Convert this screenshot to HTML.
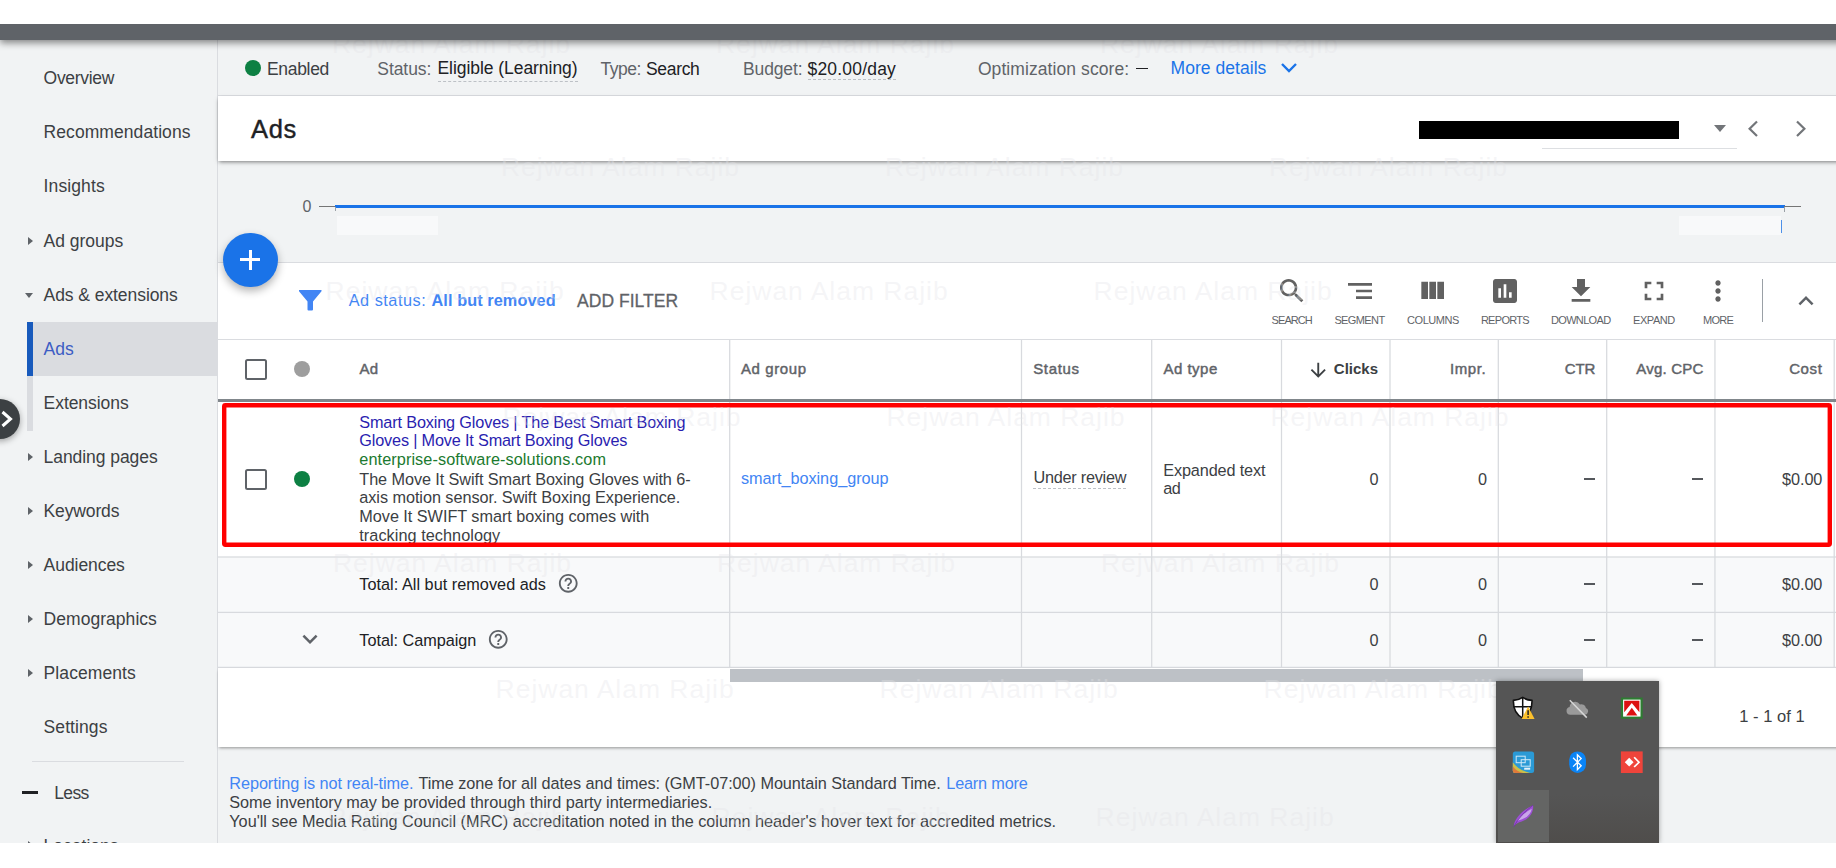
<!DOCTYPE html>
<html><head><meta charset="utf-8"><title>Ads</title>
<style>
*{box-sizing:border-box;margin:0;padding:0}
html,body{width:1836px;height:868px;overflow:hidden;background:#fff}
body{font-family:"Liberation Sans",Arial,sans-serif;color:#3c4043;position:relative}
#app{position:absolute;left:0;top:24px;width:1836px;height:819px;background:#f1f3f4;overflow:hidden}
#app div,#app span,#app svg{position:absolute}
#app span.i{position:static}
.t{white-space:nowrap}
#topbar{left:0;top:0;width:1860px;height:16px;background:#5f6368;box-shadow:0 3px 7px rgba(0,0,0,.45);z-index:20}
/* sidebar */
#side{left:0;top:16px;width:218px;height:803px;border-right:1px solid #dadce0;background:#f1f3f4}
.nav{left:44px;font-size:17.5px;color:#3c4043;line-height:20px;white-space:nowrap}
.tri{left:28px;width:0;height:0;border-left:5px solid #5f6368;border-top:4px solid transparent;border-bottom:4px solid transparent}
/* main */
#status{left:218px;top:16px;width:1618px;height:56px;border-bottom:1px solid #dadce0;background:#f1f3f4}
.st{font-size:17.5px;line-height:20px;top:17px;white-space:nowrap;color:#3c4043}
.lbl{color:#5f6368}
#head{left:218px;top:72px;width:1618px;height:65px;background:#fff;box-shadow:0 1px 3px rgba(0,0,0,.35);z-index:5}
#chart{left:218px;top:137px;width:1618px;height:101px;background:#f1f3f4}
#tool{left:218px;top:238px;width:1618px;height:78px;background:#fff;border-top:1px solid #dadce0;border-bottom:1px solid #dadce0}
.tl{font-size:10px;line-height:12px;color:#5f6368;top:51px;white-space:nowrap;letter-spacing:0}
.ic{fill:#5f6368}
#tbl{left:218px;top:316px;width:1618px;height:341px;background:#fff}
.vl{width:1px;background:#dadce0;top:0;height:341px}
.th{font-size:15px;line-height:18px;color:#5f6368;font-weight:bold;top:21px;white-space:nowrap}
.td{font-size:16.25px;line-height:18.75px;white-space:nowrap;color:#3c4043}
.r{text-align:right}
.wm{font-size:25px;color:rgba(120,120,130,.10);white-space:nowrap;z-index:30;line-height:30px;letter-spacing:.5px}
</style></head><body>
<div id="app">
<div id="topbar"></div>
<!--SIDE_S--><div id="side">
<div style="left:27px;top:282px;width:190px;height:54px;background:#dadce0"></div>
<div style="left:27px;top:282px;width:6px;height:54px;background:#185abc"></div>
<div style="left:27px;top:336px;width:6px;height:55px;background:#dadce0"></div>
<div class="nav" style="left:43.6px;top:28.2px;letter-spacing:-0.304px">Overview</div>
<div class="nav" style="left:43.6px;top:82.3px;letter-spacing:0.067px">Recommendations</div>
<div class="nav" style="left:43.6px;top:136.4px;letter-spacing:0.112px">Insights</div>
<div class="nav" style="left:43.6px;top:190.5px;letter-spacing:-0.030px">Ad groups</div>
<div class="tri" style="top:196.5px"></div>
<div class="nav" style="left:43.6px;top:244.6px;letter-spacing:-0.069px">Ads &amp; extensions</div>
<div style="left:25px;top:253.1px;width:0;height:0;border-top:5px solid #5f6368;border-left:4px solid transparent;border-right:4px solid transparent"></div>
<div class="nav" style="left:43.6px;top:298.7px;color:#3c5cc4;letter-spacing:-0.052px">Ads</div>
<div class="nav" style="left:43.6px;top:352.8px;letter-spacing:-0.060px">Extensions</div>
<div class="nav" style="left:43.6px;top:406.9px;letter-spacing:-0.063px">Landing pages</div>
<div class="tri" style="top:412.9px"></div>
<div class="nav" style="left:43.6px;top:461.0px;letter-spacing:-0.142px">Keywords</div>
<div class="tri" style="top:467.0px"></div>
<div class="nav" style="left:43.6px;top:515.1px;letter-spacing:-0.058px">Audiences</div>
<div class="tri" style="top:521.1px"></div>
<div class="nav" style="left:43.6px;top:569.2px;letter-spacing:0.040px">Demographics</div>
<div class="tri" style="top:575.2px"></div>
<div class="nav" style="left:43.6px;top:623.3px;letter-spacing:0.087px">Placements</div>
<div class="tri" style="top:629.3px"></div>
<div class="nav" style="left:43.6px;top:677.4px;letter-spacing:0.084px">Settings</div>
<div style="left:32px;top:721px;width:152px;height:1px;background:#dadce0"></div>
<div style="left:22px;top:750.5px;width:16px;height:3px;background:#202124"></div>
<div class="nav" style="left:54.3px;top:743px;letter-spacing:-0.666px">Less</div>
<div class="nav" style="left:43.6px;top:796px">Locations</div>
<div class="tri" style="top:801px"></div>
<div style="left:-20px;top:359px;width:40px;height:40px;border-radius:50%;background:#3c4043;box-shadow:0 2px 6px rgba(0,0,0,.35)"></div>
<svg style="left:0;top:369px" width="16" height="20" viewBox="0 0 16 20"><path d="M2.5 3 L10.5 10 L2.5 17" fill="none" stroke="#fff" stroke-width="3"/></svg>
</div><!--SIDE_E-->
<!--MAIN_S--><div style="left:218.0px;top:16.0px;width:1618.0px;height:56.0px;background:#f1f3f4;border-bottom:1px solid #dadce0;"></div>
<div style="left:244.7px;top:35.5px;width:16.6px;height:16.6px;background:#0d8043;border-radius:50%;"></div>
<div style="left:267.0px;top:34.5px;font-size:17.5px;line-height:20px;white-space:nowrap;letter-spacing:-0.317px;">Enabled</div>
<div style="left:377.3px;top:34.5px;font-size:17.5px;line-height:20px;white-space:nowrap;letter-spacing:-0.067px;color:#5f6368;">Status:</div>
<div style="left:437.5px;top:33.8px;font-size:17.5px;line-height:20px;white-space:nowrap;letter-spacing:-0.055px;color:#202124;">Eligible (Learning)</div>
<div style="left:437.5px;top:57.0px;width:140.0px;height:1.0px;background:transparent;border-top:1px dashed #bdc1c6;"></div>
<div style="left:600.6px;top:34.5px;font-size:17.5px;line-height:20px;white-space:nowrap;letter-spacing:-0.480px;color:#5f6368;">Type:</div>
<div style="left:646.0px;top:34.5px;font-size:17.5px;line-height:20px;white-space:nowrap;letter-spacing:-0.324px;color:#202124;">Search</div>
<div style="left:743.0px;top:34.5px;font-size:17.5px;line-height:20px;white-space:nowrap;letter-spacing:-0.132px;color:#5f6368;">Budget:</div>
<div style="left:807.5px;top:34.5px;font-size:17.5px;line-height:20px;white-space:nowrap;letter-spacing:0.191px;color:#202124;">$20.00/day</div>
<div style="left:807.5px;top:55.0px;width:88.5px;height:1.0px;background:transparent;border-top:1px dashed #bdc1c6;"></div>
<div style="left:977.9px;top:34.5px;font-size:17.5px;line-height:20px;white-space:nowrap;letter-spacing:0.081px;color:#5f6368;">Optimization score:</div>
<div style="left:1136.0px;top:43.7px;width:11.6px;height:1.8px;background:#202124;"></div>
<div style="left:1170.6px;top:33.5px;font-size:17.5px;line-height:20px;white-space:nowrap;letter-spacing:0.041px;color:#1a73e8;">More details</div>
<svg style="left:1280px;top:38px" width="18" height="12" viewBox="0 0 18 12"><path d="M2 2 L9 9 L16 2" fill="none" stroke="#1a73e8" stroke-width="2.4"/></svg>
<div style="left:218.0px;top:72.0px;width:1640.0px;height:64.6px;background:#fff;box-shadow:0 2px 4px -1px rgba(0,0,0,.5);z-index:5;"></div>
<div style="left:251.0px;top:94.7px;font-size:25.5px;line-height:20px;white-space:nowrap;letter-spacing:0.687px;color:#202124;z-index:6;-webkit-text-stroke:.4px #202124;">Ads</div>
<div style="left:1542.0px;top:124.0px;width:195.2px;height:1.0px;background:#dddfe2;z-index:6;"></div>
<div style="left:1419.0px;top:96.5px;width:260.0px;height:18.2px;background:#000;z-index:7;"></div>
<div style="left:1714px;top:100.5px;width:0;height:0;border-top:7px solid #727579;border-left:6.6px solid transparent;border-right:6.6px solid transparent;z-index:6"></div>
<svg style="left:1745px;top:95px;z-index:6" width="16" height="20" viewBox="0 0 16 20"><path d="M12 2.5 L4.6 9.7 L12 17" fill="none" stroke="#727579" stroke-width="2.2"/></svg>
<svg style="left:1793px;top:95px;z-index:6" width="16" height="20" viewBox="0 0 16 20"><path d="M4 2.5 L11.4 9.7 L4 17" fill="none" stroke="#727579" stroke-width="2.2"/></svg>
<div style="left:302.6px;top:172.7px;font-size:16px;line-height:20px;white-space:nowrap;letter-spacing:-0.198px;color:#5f6368;">0</div>
<div style="left:319.3px;top:182.0px;width:16.0px;height:1.0px;background:#757575;"></div>
<div style="left:335.0px;top:181.4px;width:1449.5px;height:2.7px;background:#1a73e8;"></div>
<div style="left:1784.0px;top:182.0px;width:17.0px;height:1.0px;background:#757575;"></div>
<div style="left:335.0px;top:183.0px;width:1.0px;height:4.0px;background:#9aa0a6;"></div>
<div style="left:1784.0px;top:183.0px;width:1.0px;height:5.0px;background:#9aa0a6;"></div>
<div style="left:337.0px;top:192.0px;width:101.0px;height:19.0px;background:#f8f9fa;"></div>
<div style="left:1679.0px;top:192.0px;width:102.0px;height:19.0px;background:#f8f9fa;"></div>
<div style="left:1781.0px;top:196.0px;width:1.0px;height:12.5px;background:#4d90e8;"></div>
<div style="left:218.0px;top:238.0px;width:1618.0px;height:78.0px;background:#fff;border-top:1px solid #dadce0;border-bottom:1px solid #dadce0;"></div>
<div style="left:223.3px;top:208.6px;width:54.4px;height:54.4px;background:#1a73e8;border-radius:50%;box-shadow:0 4px 9px rgba(0,0,0,.3);z-index:8;"></div>
<div style="left:240.4px;top:234.2px;width:20.0px;height:3.0px;background:#fff;z-index:9;"></div>
<div style="left:248.9px;top:225.7px;width:3.0px;height:20.0px;background:#fff;z-index:9;"></div>
<svg style="left:299px;top:266px" width="23" height="21" viewBox="0 0 23 21"><path d="M0 0 H22.5 V1.2 L14 11.5 V19.5 Q14 20.6 13 20.6 H9.5 Q8.5 20.6 8.5 19.5 V11.5 L0 1.2 Z" fill="#4285f4"/></svg>
<div style="left:348.7px;top:266.1px;font-size:16.25px;line-height:20px;white-space:nowrap;letter-spacing:0.524px;color:#4285f4;">Ad status:</div>
<div style="left:431.5px;top:266.1px;font-size:16.25px;line-height:20px;white-space:nowrap;letter-spacing:0.094px;font-weight:bold;color:#4285f4;">All but removed</div>
<div style="left:577.0px;top:266.9px;font-size:17.5px;line-height:20px;white-space:nowrap;letter-spacing:0.041px;color:#5f6368;-webkit-text-stroke:.3px #5f6368;">ADD FILTER</div>
<svg style="left:1275.5px;top:251.0px" width="32.0" height="32.0" viewBox="0 0 24 24"><path d="M15.5 14h-.79l-.28-.27C15.41 12.59 16 11.11 16 9.5 16 5.91 13.09 3 9.5 3S3 5.91 3 9.5 5.91 16 9.5 16c1.61 0 3.09-.59 4.23-1.57l.27.28v.79l5 4.99L20.49 19l-4.99-5zm-6 0C7.01 14 5 11.99 5 9.5S7.01 5 9.5 5 14 7.01 14 9.5 11.99 14 9.5 14z" fill="#616161" /></svg>
<svg style="left:1343.5px;top:251.0px" width="32.0" height="32.0" viewBox="0 0 24 24"><path d="M9 18h12v-2H9v2zM3 6v2h18V6H3zm6 7h12v-2H9v2z" fill="#616161" /></svg>
<svg style="left:1416.4px;top:250.6px" width="32.0" height="32.0" viewBox="0 0 24 24"><path d="M10 18h5V5h-5v13zm-6 0h5V5H4v13zM16 5v13h5V5h-5z" fill="#616161" /></svg>
<svg style="left:1489.0px;top:251.0px" width="32.0" height="32.0" viewBox="0 0 24 24"><path d="M19 3H5c-1.1 0-2 .9-2 2v14c0 1.1.9 2 2 2h14c1.1 0 2-.9 2-2V5c0-1.1-.9-2-2-2zM9 17H7v-7h2v7zm4 0h-2V7h2v10zm4 0h-2v-4h2v4z" fill="#616161" /></svg>
<svg style="left:1564.7px;top:250.9px" width="32.0" height="32.0" viewBox="0 0 24 24"><path d="M19 9h-4V3H9v6H5l7 7 7-7zM5 18v2h14v-2H5z" fill="#616161" /></svg>
<svg style="left:1637.6px;top:250.8px" width="32.0" height="32.0" viewBox="0 0 24 24"><path d="M7 14H5v5h5v-2H7v-3zm-2-4h2V7h3V5H5v5zm12 7h-3v2h5v-5h-2v3zM14 5v2h3v3h2V5h-5z" fill="#616161" /></svg>
<svg style="left:1702.1px;top:251.0px" width="32.0" height="32.0" viewBox="0 0 24 24"><path d="M12 8c1.1 0 2-.9 2-2s-.9-2-2-2-2 .9-2 2 .9 2 2 2zm0 2c-1.1 0-2 .9-2 2s.9 2 2 2 2-.9 2-2-.9-2-2-2zm0 6c-1.1 0-2 .9-2 2s.9 2 2 2 2-.9 2-2-.9-2-2-2z" fill="#616161" /></svg>
<svg style="left:1791.2px;top:262.2px" width="30.0" height="30.0" viewBox="0 0 24 24"><path d="M12 8l-6 6 1.41 1.41L12 10.83l4.59 4.58L18 14z" fill="#5f6368" /></svg>
<div style="left:1761.6px;top:255.0px;width:1.5px;height:43.0px;background:#9aa0a6;"></div>
<div style="left:1271.6px;top:285.8px;font-size:11px;line-height:20px;white-space:nowrap;letter-spacing:-0.941px;color:#5f6368;">SEARCH</div>
<div style="left:1334.4px;top:285.8px;font-size:11px;line-height:20px;white-space:nowrap;letter-spacing:-0.613px;color:#5f6368;">SEGMENT</div>
<div style="left:1407.0px;top:285.8px;font-size:11px;line-height:20px;white-space:nowrap;letter-spacing:-0.429px;color:#5f6368;">COLUMNS</div>
<div style="left:1480.9px;top:285.8px;font-size:11px;line-height:20px;white-space:nowrap;letter-spacing:-0.711px;color:#5f6368;">REPORTS</div>
<div style="left:1551.0px;top:285.8px;font-size:11px;line-height:20px;white-space:nowrap;letter-spacing:-0.673px;color:#5f6368;">DOWNLOAD</div>
<div style="left:1633.0px;top:285.8px;font-size:11px;line-height:20px;white-space:nowrap;letter-spacing:-0.437px;color:#5f6368;">EXPAND</div>
<div style="left:1703.0px;top:285.8px;font-size:11px;line-height:20px;white-space:nowrap;letter-spacing:-0.700px;color:#5f6368;">MORE</div>
<div style="left:218.0px;top:316.0px;width:1618.0px;height:328.0px;background:#fff;"></div>
<div style="left:218.0px;top:533.0px;width:1616.0px;height:55.5px;background:#f8f9fa;"></div>
<div style="left:218.0px;top:589.0px;width:1616.0px;height:54.5px;background:#f8f9fa;"></div>
<svg style="left:218px;top:526px" width="1618" height="120" viewBox="218 550 1618 120"><rect x="218" y="556.375" width="1618" height="1.25" fill="#d8dade"/><rect x="218" y="611.775" width="1618" height="1.25" fill="#d8dade"/><rect x="218" y="666.775" width="1618" height="1.25" fill="#d8dade"/></svg>
<svg style="left:218px;top:316px" width="1618" height="328" viewBox="218 340 1618 328"><rect x="729.075" y="340" width="1.25" height="328" fill="#d8dade"/><rect x="1020.875" y="340" width="1.25" height="328" fill="#d8dade"/><rect x="1151.075" y="340" width="1.25" height="328" fill="#d8dade"/><rect x="1280.875" y="340" width="1.25" height="328" fill="#d8dade"/><rect x="1389.375" y="340" width="1.25" height="328" fill="#d8dade"/><rect x="1497.675" y="340" width="1.25" height="328" fill="#d8dade"/><rect x="1606.075" y="340" width="1.25" height="328" fill="#d8dade"/><rect x="1714.325" y="340" width="1.25" height="328" fill="#d8dade"/><rect x="1833.575" y="340" width="1.25" height="328" fill="#d8dade"/></svg>
<div style="left:218.0px;top:375.4px;width:1618.0px;height:2.4px;background:#80868b;"></div>
<div style="left:245.2px;top:334.8px;width:21.4px;height:21.4px;background:transparent;border:2.4px solid #5f6368;border-radius:2.5px;"></div>
<div style="left:293.8px;top:337.0px;width:16.4px;height:16.4px;background:#9e9e9e;border-radius:50%;"></div>
<div style="left:359.4px;top:334.9px;font-size:15px;line-height:20px;white-space:nowrap;letter-spacing:0.327px;color:#5f6368;-webkit-text-stroke:.45px #5f6368;">Ad</div>
<div style="left:741.0px;top:334.9px;font-size:15px;line-height:20px;white-space:nowrap;letter-spacing:0.591px;color:#5f6368;-webkit-text-stroke:.45px #5f6368;">Ad group</div>
<div style="left:1033.2px;top:334.9px;font-size:15px;line-height:20px;white-space:nowrap;letter-spacing:0.663px;color:#5f6368;-webkit-text-stroke:.45px #5f6368;">Status</div>
<div style="left:1163.5px;top:334.9px;font-size:15px;line-height:20px;white-space:nowrap;letter-spacing:0.477px;color:#5f6368;-webkit-text-stroke:.45px #5f6368;">Ad type</div>
<div style="left:1333.8px;top:334.9px;font-size:15px;line-height:20px;white-space:nowrap;letter-spacing:0.001px;font-weight:bold;color:#3c4043;">Clicks</div>
<svg style="left:1307.2px;top:335.4px" width="22.5" height="22.5" viewBox="0 0 24 24"><path d="M20 12l-1.41-1.41L13 16.17V4h-2v12.17l-5.58-5.59L4 12l8 8 8-8z" fill="#3c4043"/></svg>
<div style="left:1450.0px;top:334.9px;font-size:15px;line-height:20px;white-space:nowrap;letter-spacing:0.592px;color:#5f6368;-webkit-text-stroke:.45px #5f6368;">Impr.</div>
<div style="left:1564.7px;top:334.9px;font-size:15px;line-height:20px;white-space:nowrap;letter-spacing:-0.109px;color:#5f6368;-webkit-text-stroke:.45px #5f6368;">CTR</div>
<div style="left:1636.2px;top:334.9px;font-size:15px;line-height:20px;white-space:nowrap;letter-spacing:0.227px;color:#5f6368;-webkit-text-stroke:.45px #5f6368;">Avg. CPC</div>
<div style="left:1789.2px;top:334.9px;font-size:15px;line-height:20px;white-space:nowrap;letter-spacing:0.590px;color:#5f6368;-webkit-text-stroke:.45px #5f6368;">Cost</div>
<div style="left:245.2px;top:444.6px;width:21.4px;height:21.4px;background:transparent;border:2.4px solid #5f6368;border-radius:2.5px;"></div>
<div style="left:293.6px;top:447.1px;width:16.4px;height:16.4px;background:#0d8043;border-radius:50%;"></div>
<div style="left:359.3px;top:387.6px;font-size:16.25px;line-height:20px;white-space:nowrap;letter-spacing:-0.155px;color:#2a1eb0;">Smart Boxing Gloves | The Best Smart Boxing</div>
<div style="left:359.3px;top:406.4px;font-size:16.25px;line-height:20px;white-space:nowrap;letter-spacing:-0.173px;color:#2a1eb0;">Gloves | Move It Smart Boxing Gloves</div>
<div style="left:359.3px;top:425.2px;font-size:16.25px;line-height:20px;white-space:nowrap;letter-spacing:0.087px;color:#1b7a2f;">enterprise-software-solutions.com</div>
<div style="left:359.3px;top:444.7px;font-size:16.25px;line-height:20px;white-space:nowrap;letter-spacing:-0.085px;">The Move It Swift Smart Boxing Gloves with 6-</div>
<div style="left:359.3px;top:463.4px;font-size:16.25px;line-height:20px;white-space:nowrap;letter-spacing:-0.053px;">axis motion sensor. Swift Boxing Experience.</div>
<div style="left:359.3px;top:482.1px;font-size:16.25px;line-height:20px;white-space:nowrap;letter-spacing:-0.037px;">Move It SWIFT smart boxing comes with</div>
<div style="left:359.3px;top:500.8px;font-size:16.25px;line-height:20px;white-space:nowrap;letter-spacing:0.052px;">tracking technology</div>
<div style="left:741.0px;top:444.4px;font-size:16.25px;line-height:20px;white-space:nowrap;letter-spacing:-0.035px;color:#4285f4;">smart_boxing_group</div>
<div style="left:1033.4px;top:443.4px;font-size:16.25px;line-height:20px;white-space:nowrap;letter-spacing:-0.235px;">Under review</div>
<div style="left:1033.4px;top:463.6px;width:93.0px;height:1.0px;background:transparent;border-top:1px dashed #bdc1c6;"></div>
<div style="left:1163.3px;top:435.9px;font-size:16.25px;line-height:20px;white-space:nowrap;letter-spacing:-0.145px;">Expanded text</div>
<div style="left:1163.3px;top:454.4px;font-size:16.25px;line-height:20px;white-space:nowrap;letter-spacing:-0.537px;">ad</div>
<div style="left:1369.5px;top:444.6px;font-size:16.25px;line-height:20px;white-space:nowrap;letter-spacing:-0.337px;">0</div>
<div style="left:1477.9px;top:444.6px;font-size:16.25px;line-height:20px;white-space:nowrap;letter-spacing:-0.337px;">0</div>
<div style="left:1584.2px;top:454.2px;width:10.8px;height:1.6px;background:#55585c;"></div>
<div style="left:1692.4px;top:454.2px;width:10.8px;height:1.6px;background:#55585c;"></div>
<div style="left:1782.1px;top:444.6px;font-size:16.25px;line-height:20px;white-space:nowrap;letter-spacing:-0.092px;">$0.00</div>
<div style="left:1369.5px;top:550.2px;font-size:16.25px;line-height:20px;white-space:nowrap;letter-spacing:-0.337px;">0</div>
<div style="left:1477.9px;top:550.2px;font-size:16.25px;line-height:20px;white-space:nowrap;letter-spacing:-0.337px;">0</div>
<div style="left:1584.2px;top:559.2px;width:10.8px;height:1.6px;background:#55585c;"></div>
<div style="left:1692.4px;top:559.2px;width:10.8px;height:1.6px;background:#55585c;"></div>
<div style="left:1782.1px;top:550.2px;font-size:16.25px;line-height:20px;white-space:nowrap;letter-spacing:-0.092px;">$0.00</div>
<div style="left:1369.5px;top:606.0px;font-size:16.25px;line-height:20px;white-space:nowrap;letter-spacing:-0.337px;">0</div>
<div style="left:1477.9px;top:606.0px;font-size:16.25px;line-height:20px;white-space:nowrap;letter-spacing:-0.337px;">0</div>
<div style="left:1584.2px;top:615.2px;width:10.8px;height:1.6px;background:#55585c;"></div>
<div style="left:1692.4px;top:615.2px;width:10.8px;height:1.6px;background:#55585c;"></div>
<div style="left:1782.1px;top:606.0px;font-size:16.25px;line-height:20px;white-space:nowrap;letter-spacing:-0.092px;">$0.00</div>
<svg style="left:218px;top:376px;z-index:10" width="1618" height="150" viewBox="218 400 1618 150"><rect x="224.2" y="405.3" width="1605.6" height="139.4" rx="1.2" fill="none" stroke="#ff0000" stroke-width="4.4"/></svg>
<div style="left:359.3px;top:550.2px;font-size:16.25px;line-height:20px;white-space:nowrap;letter-spacing:0.025px;color:#202124;">Total: All but removed ads</div>
<div style="left:359.3px;top:606.0px;font-size:16.25px;line-height:20px;white-space:nowrap;letter-spacing:-0.028px;color:#202124;">Total: Campaign</div>
<svg style="left:556.5px;top:548.4px" width="22.5" height="22.5" viewBox="0 0 24 24"><path d="M11 18h2v-2h-2v2zm1-16C6.48 2 2 6.48 2 12s4.48 10 10 10 10-4.48 10-10S17.52 2 12 2zm0 18c-4.41 0-8-3.59-8-8s3.59-8 8-8 8 3.59 8 8-3.59 8-8 8zm0-14c-2.21 0-4 1.79-4 4h2c0-1.1.9-2 2-2s2 .9 2 2c0 2-3 1.75-3 5h2c0-2.25 3-2.5 3-5 0-2.21-1.79-4-4-4z" fill="#5f6368" /></svg>
<svg style="left:486.8px;top:603.8px" width="22.5" height="22.5" viewBox="0 0 24 24"><path d="M11 18h2v-2h-2v2zm1-16C6.48 2 2 6.48 2 12s4.48 10 10 10 10-4.48 10-10S17.52 2 12 2zm0 18c-4.41 0-8-3.59-8-8s3.59-8 8-8 8 3.59 8 8-3.59 8-8 8zm0-14c-2.21 0-4 1.79-4 4h2c0-1.1.9-2 2-2s2 .9 2 2c0 2-3 1.75-3 5h2c0-2.25 3-2.5 3-5 0-2.21-1.79-4-4-4z" fill="#5f6368" /></svg>
<svg style="left:295.4px;top:599.9px" width="30.0" height="30.0" viewBox="0 0 24 24"><path d="M16.59 8.59L12 13.17 7.41 8.59 6 10l6 6 6-6z" fill="#5f6368" /></svg>
<div style="left:218.0px;top:644.0px;width:1640.0px;height:79.3px;background:#fff;box-shadow:0 2px 3px -1px rgba(0,0,0,.4);"></div>
<div style="left:730.0px;top:644.5px;width:853.0px;height:13.0px;background:#bdc1c6;"></div>
<div style="left:1739.2px;top:681.5px;font-size:16.5px;line-height:20px;white-space:nowrap;letter-spacing:0.028px;color:#3c4043;">1 - 1 of 1</div>
<div style="left:229.3px;top:749.1px;font-size:16.25px;line-height:20px;white-space:nowrap;letter-spacing:-0.072px;color:#4285f4;">Reporting is not real-time.</div>
<div style="left:418.5px;top:749.1px;font-size:16.25px;line-height:20px;white-space:nowrap;letter-spacing:-0.053px;">Time zone for all dates and times: (GMT-07:00) Mountain Standard Time.</div>
<div style="left:946.3px;top:749.1px;font-size:16.25px;line-height:20px;white-space:nowrap;letter-spacing:-0.179px;color:#4285f4;">Learn more</div>
<div style="left:229.3px;top:768.2px;font-size:16.25px;line-height:20px;white-space:nowrap;letter-spacing:-0.033px;">Some inventory may be provided through third party intermediaries.</div>
<div style="left:229.3px;top:787.3px;font-size:16.25px;line-height:20px;white-space:nowrap;letter-spacing:-0.023px;">You'll see Media Rating Council (MRC) accreditation noted in the column header's hover text for accredited metrics.</div>
<div style="left:1495.8px;top:656.8px;width:163.2px;height:162.0px;background:linear-gradient(#555555 0%,#555555 70%,#4f4d4b 100%);box-shadow:0 0 5px rgba(0,0,0,.35);z-index:40;"></div>
<div style="left:1498.1px;top:766.4px;width:51.0px;height:52.0px;background:#646564;z-index:41;"></div>
<svg style="left:1495.8px;top:656.8px;z-index:42" width="163.2" height="162" viewBox="1495.8 680.8 163.2 162">
<!-- shield -->
<path d="M1522.5 697.2 C1519.5 699.3 1516.3 700 1513.2 700.2 C1513 707.5 1515.2 714.3 1522.5 717.9 C1529.8 714.3 1532 707.5 1531.8 700.2 C1528.7 700 1525.5 699.3 1522.5 697.2 Z" fill="#fff" stroke="#111" stroke-width="1.6"/>
<path d="M1522.5 697.5 V717.5 M1513.3 706.6 H1531.7" stroke="#111" stroke-width="1.5" fill="none"/>
<path d="M1527.9 706.3 L1534.4 718.8 H1521.4 Z" fill="#fbc02d"/>
<path d="M1527.9 710 V714.8 M1527.9 716 V717.6" stroke="#222" stroke-width="1.5"/>
<!-- cloud -->
<path d="M1570 714.6 a3.9 3.9 0 0 1 -.6 -7.7 a5.6 5.6 0 0 1 10.3 -2.6 a4.6 4.6 0 0 1 6 3.4 a3.6 3.6 0 0 1 -1 6.9 Z" fill="#9a9a9a"/>
<path d="M1569.6 700 L1586.6 717.4" stroke="#d6d6d6" stroke-width="1.5"/>
<!-- red A -->
<rect x="1620.7" y="697.3" width="21.8" height="21.3" fill="#2e7d32"/>
<rect x="1622.9" y="699.4" width="17.4" height="17" fill="#fff"/>
<path d="M1624 700.5 H1639.2 V712 L1631.6 702.8 L1624 712 Z" fill="#dd1111"/>
<path d="M1626 715.3 L1631.6 707.5 L1637.2 715.3 Z" fill="#dd1111"/>
<!-- intel -->
<rect x="1512.6" y="751.2" width="21.3" height="21.6" rx="2.5" fill="#2a9ad6"/>
<path d="M1512.6 762 Q1518 770 1530 772.8 H1515 Q1512.6 772.8 1512.6 770.5 Z" fill="#c9c04a"/>
<path d="M1512.6 766 Q1516 771 1523 772.8 H1515 Q1512.6 772.8 1512.6 770.5 Z" fill="#e07a3a"/>
<rect x="1516" y="756" width="9" height="6.5" fill="none" stroke="#cfe9f7" stroke-width="1"/>
<rect x="1521" y="759.5" width="9" height="6.5" fill="none" stroke="#cfe9f7" stroke-width="1"/>
<path d="M1524 768.5 h6" stroke="#e3f2fb" stroke-width="2"/>
<!-- bluetooth -->
<rect x="1569" y="751.2" width="16.8" height="21.6" rx="8.4" fill="#0a84f6"/>
<path d="M1572.9 757.6 L1581 765.6 L1577.2 769.4 V754.6 L1581 758.4 L1572.9 766.4" fill="none" stroke="#fff" stroke-width="1.3"/>
<!-- anydesk -->
<rect x="1620.7" y="751.2" width="21.8" height="21.6" fill="#ef443b"/>
<path d="M1629 757.6 L1633.4 762 L1629 766.4 L1624.6 762 Z" fill="#fff"/>
<path d="M1633.3 757.6 L1634.6 756.6 L1640 762 L1634.6 767.4 L1633.3 766.4 L1637.7 762 Z" fill="#fff"/>
<!-- feather -->
<path d="M1513.5 826.6 C1514 818 1522 810 1532.8 805 C1534 812 1529 820 1519 822 C1516.5 823 1514.5 825 1513.5 826.6 Z" fill="#9c4fd4"/>
<path d="M1517 820.5 C1521 815.5 1526 811.5 1531.6 808.6 C1531 814 1526 818.6 1517 820.5 Z" fill="#c9a6ea"/>
<path d="M1513.5 826.6 C1518 818 1525 811 1532.8 805" stroke="#6a2ca0" stroke-width=".7" fill="none"/>
</svg>
<div style="left:332.0px;top:10.2px;font-size:26.5px;line-height:20px;white-space:nowrap;letter-spacing:0.977px;color:rgba(228,228,232,.36);z-index:15;">Rejwan Alam Rajib</div>
<div style="left:716.0px;top:10.2px;font-size:26.5px;line-height:20px;white-space:nowrap;letter-spacing:0.977px;color:rgba(228,228,232,.36);z-index:15;">Rejwan Alam Rajib</div>
<div style="left:1100.0px;top:10.2px;font-size:26.5px;line-height:20px;white-space:nowrap;letter-spacing:0.977px;color:rgba(228,228,232,.36);z-index:15;">Rejwan Alam Rajib</div>
<div style="left:501.0px;top:132.6px;font-size:26.5px;line-height:20px;white-space:nowrap;letter-spacing:0.977px;color:rgba(228,228,232,.36);z-index:15;">Rejwan Alam Rajib</div>
<div style="left:885.0px;top:132.6px;font-size:26.5px;line-height:20px;white-space:nowrap;letter-spacing:0.977px;color:rgba(228,228,232,.36);z-index:15;">Rejwan Alam Rajib</div>
<div style="left:1269.0px;top:132.6px;font-size:26.5px;line-height:20px;white-space:nowrap;letter-spacing:0.977px;color:rgba(228,228,232,.36);z-index:15;">Rejwan Alam Rajib</div>
<div style="left:325.6px;top:256.5px;font-size:26.5px;line-height:20px;white-space:nowrap;letter-spacing:0.977px;color:rgba(228,228,232,.36);z-index:15;">Rejwan Alam Rajib</div>
<div style="left:709.6px;top:256.5px;font-size:26.5px;line-height:20px;white-space:nowrap;letter-spacing:0.977px;color:rgba(228,228,232,.36);z-index:15;">Rejwan Alam Rajib</div>
<div style="left:1093.6px;top:256.5px;font-size:26.5px;line-height:20px;white-space:nowrap;letter-spacing:0.977px;color:rgba(228,228,232,.36);z-index:15;">Rejwan Alam Rajib</div>
<div style="left:502.5px;top:383.0px;font-size:26.5px;line-height:20px;white-space:nowrap;letter-spacing:0.977px;color:rgba(228,228,232,.36);z-index:15;">Rejwan Alam Rajib</div>
<div style="left:886.5px;top:383.0px;font-size:26.5px;line-height:20px;white-space:nowrap;letter-spacing:0.977px;color:rgba(228,228,232,.36);z-index:15;">Rejwan Alam Rajib</div>
<div style="left:1270.5px;top:383.0px;font-size:26.5px;line-height:20px;white-space:nowrap;letter-spacing:0.977px;color:rgba(228,228,232,.36);z-index:15;">Rejwan Alam Rajib</div>
<div style="left:333.0px;top:528.7px;font-size:26.5px;line-height:20px;white-space:nowrap;letter-spacing:0.977px;color:rgba(228,228,232,.36);z-index:15;">Rejwan Alam Rajib</div>
<div style="left:717.0px;top:528.7px;font-size:26.5px;line-height:20px;white-space:nowrap;letter-spacing:0.977px;color:rgba(228,228,232,.36);z-index:15;">Rejwan Alam Rajib</div>
<div style="left:1101.0px;top:528.7px;font-size:26.5px;line-height:20px;white-space:nowrap;letter-spacing:0.977px;color:rgba(228,228,232,.36);z-index:15;">Rejwan Alam Rajib</div>
<div style="left:495.6px;top:655.2px;font-size:26.5px;line-height:20px;white-space:nowrap;letter-spacing:0.977px;color:rgba(228,228,232,.36);z-index:15;">Rejwan Alam Rajib</div>
<div style="left:879.6px;top:655.2px;font-size:26.5px;line-height:20px;white-space:nowrap;letter-spacing:0.977px;color:rgba(228,228,232,.36);z-index:15;">Rejwan Alam Rajib</div>
<div style="left:1263.6px;top:655.2px;font-size:26.5px;line-height:20px;white-space:nowrap;letter-spacing:0.977px;color:rgba(228,228,232,.36);z-index:15;">Rejwan Alam Rajib</div>
<div style="left:327.6px;top:783.2px;font-size:26.5px;line-height:20px;white-space:nowrap;letter-spacing:0.977px;color:rgba(228,228,232,.36);z-index:15;">Rejwan Alam Rajib</div>
<div style="left:711.6px;top:783.2px;font-size:26.5px;line-height:20px;white-space:nowrap;letter-spacing:0.977px;color:rgba(228,228,232,.36);z-index:15;">Rejwan Alam Rajib</div>
<div style="left:1095.6px;top:783.2px;font-size:26.5px;line-height:20px;white-space:nowrap;letter-spacing:0.977px;color:rgba(228,228,232,.36);z-index:15;">Rejwan Alam Rajib</div><!--MAIN_E-->
</div>
</body></html>
